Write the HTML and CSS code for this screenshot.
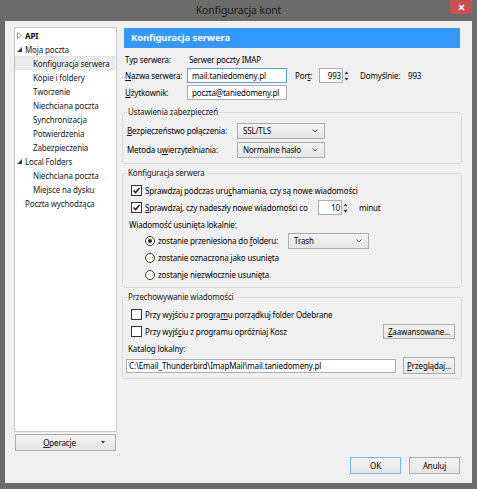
FILE: index.html
```html
<!DOCTYPE html>
<html lang="pl">
<head>
<meta charset="utf-8">
<title>Konfiguracja kont</title>
<link rel="stylesheet" href="styles.css">
</head>
<body>
<div class="window">
  <div class="titlebar">
    <span></span>
    <span class="title">Konfiguracja kont</span>
    <span class="close"><svg width="7" height="7" viewBox="0 0 7 7"><path d="M1 1L6 6M6 1L1 6" stroke="#fff" stroke-width="1.6"/></svg></span>
  </div>
  <div class="client">
    <div class="top">
      <div class="sidebar">
        <ul class="tree">
          <li class="row lvl0"><span class="tw"><svg width="5" height="7" viewBox="0 0 5 7"><path d="M0.5 0.5L4.5 3.5L0.5 6.5Z" fill="none" stroke="#8a8a8a" stroke-width="0.9"/></svg></span><b>API</b></li>
          <li class="row lvl0"><span class="tw"><svg width="5" height="5" viewBox="0 0 5 5"><path d="M5 0L5 5L0 5Z" fill="#404040"/></svg></span>Moja poczta</li>
          <li class="row lvl1 sel">Konfiguracja serwera</li>
          <li class="row lvl1">Kopie i foldery</li>
          <li class="row lvl1">Tworzenie</li>
          <li class="row lvl1">Niechciana poczta</li>
          <li class="row lvl1">Synchronizacja</li>
          <li class="row lvl1">Potwierdzenia</li>
          <li class="row lvl1">Zabezpieczenia</li>
          <li class="row lvl0"><span class="tw"><svg width="5" height="5" viewBox="0 0 5 5"><path d="M5 0L5 5L0 5Z" fill="#404040"/></svg></span>Local Folders</li>
          <li class="row lvl1">Niechciana poczta</li>
          <li class="row lvl1">Miejsce na dysku</li>
          <li class="row lvl0"><span class="tw"></span>Poczta wychodząca</li>
        </ul>
        <div class="btn ops"><span class="ops-label"><u>O</u>peracje</span><span class="ops-arrow"><svg width="4" height="3" viewBox="0 0 4 3"><path d="M0 0H4L2 2.5Z" fill="#333"/></svg></span></div>
      </div>
      <div class="main">
        <div class="header">Konfiguracja serwera</div>
        <div class="info">
          <div class="info-row">
            <span class="lbl">Typ serwera:</span>
            <span class="val">Serwer poczty IMAP</span>
          </div>
          <div class="info-row">
            <span class="lbl"><u>N</u>azwa serwera:</span>
            <span class="input focus w-server">mail.taniedomeny.pl</span>
            <span class="port-lbl">Por<u>t</u>:</span>
            <span class="spin"><span class="input num">993</span><span class="arrows"><svg width="7" height="14" viewBox="0 0 7 14"><path d="M1.5 5L3.5 2.5L5.5 5Z M1.5 9L3.5 11.5L5.5 9Z" fill="#333"/><path d="M0 7H7" stroke="#c9c9c9"/></svg></span></span>
            <span class="def">Domyślnie:</span>
            <span class="defv">993</span>
          </div>
          <div class="info-row">
            <span class="lbl"><u>U</u>żytkownik:</span>
            <span class="input w-server">poczta@taniedomeny.pl</span>
          </div>
        </div>

        <fieldset class="group g1">
          <legend>Ustawienia zabezpieczeń</legend>
          <div class="sec-grid">
            <span><u>B</u>ezpieczeństwo połączenia:</span>
            <span class="select w-sec"><span>SSL/TLS</span><svg class="chev" width="6" height="4" viewBox="0 0 6 4"><path d="M0.5 0.5L3 3L5.5 0.5" fill="none" stroke="#555" stroke-width="1"/></svg></span>
            <span>Metoda u<u>w</u>ierzytelniania:</span>
            <span class="select w-sec"><span>Normalne hasło</span><svg class="chev" width="6" height="4" viewBox="0 0 6 4"><path d="M0.5 0.5L3 3L5.5 0.5" fill="none" stroke="#555" stroke-width="1"/></svg></span>
          </div>
        </fieldset>

        <fieldset class="group g2">
          <legend>Konfiguracja serwera</legend>
          <div class="line chk-line">
            <span class="check on"><svg width="9" height="9" viewBox="0 0 9 9"><path d="M1.5 4.5L3.6 6.6L7.6 2" fill="none" stroke="#222" stroke-width="1.5"/></svg></span>
            <span>Sprawdzaj podczas uru<u>c</u>hamiania, czy są nowe wiadomości</span>
          </div>
          <div class="line chk-line">
            <span class="check on"><svg width="9" height="9" viewBox="0 0 9 9"><path d="M1.5 4.5L3.6 6.6L7.6 2" fill="none" stroke="#222" stroke-width="1.5"/></svg></span>
            <span class="chk2-text"><u>S</u>prawdzaj, czy nadeszły nowe wiadomości co</span>
            <span class="spin"><span class="input num">10</span><span class="arrows"><svg width="7" height="14" viewBox="0 0 7 14"><path d="M1.5 5L3.5 2.5L5.5 5Z M1.5 9L3.5 11.5L5.5 9Z" fill="#333"/><path d="M0 7H7" stroke="#c9c9c9"/></svg></span></span>
            <span class="minut">minut</span>
          </div>
          <div class="line del-line">Wiadomość usunięta lokalnie:</div>
          <div class="line radio-line">
            <span class="radio on"><span class="dot"></span></span>
            <span class="radio1-text">zostanie przeniesiona do <u>f</u>olderu:</span>
            <span class="select w-trash"><span>Trash</span><svg class="chev" width="6" height="4" viewBox="0 0 6 4"><path d="M0.5 0.5L3 3L5.5 0.5" fill="none" stroke="#555" stroke-width="1"/></svg></span>
          </div>
          <div class="line radio-line">
            <span class="radio"></span>
            <span>zostanie oznaczona jako usunięta</span>
          </div>
          <div class="line radio-line">
            <span class="radio"></span>
            <span>zostanje niezwłocznie usunięta</span>
          </div>
        </fieldset>

        <fieldset class="group g3">
          <legend>Przechowywanie wiadomości</legend>
          <div class="line chk-line">
            <span class="check"></span>
            <span>Przy wyjściu z progra<u>m</u>u porządkuj folder Odebrane</span>
          </div>
          <div class="line chk-line">
            <span class="check"></span>
            <span>Przy wyjś<u>c</u>iu z programu opróżniaj Kosz</span>
            <span class="btn adv"><u>Z</u>aawansowane...</span>
          </div>
          <div class="line kat-line">Katalog lokalny:</div>
          <div class="line path-line">
            <span class="input path">C:\Email_Thunderbird\ImapMail\mail.taniedomeny.pl</span>
            <span class="btn browse"><u>P</u>rzeglądaj...</span>
          </div>
        </fieldset>
      </div>
    </div>
    <div class="footer">
      <span class="btn dlg default">OK</span>
      <span class="btn dlg">Anuluj</span>
    </div>
  </div>
</div>
</body>
</html>
```
FILE: styles.css
```css
* { box-sizing: border-box; margin: 0; padding: 0; }
html, body { width: 477px; height: 489px; overflow: hidden; }
body {
  font-family: "Noto Sans", "Open Sans", sans-serif;
  font-size: 8px;
  letter-spacing: -0.15px;
  color: #000;
  background: #6b6b6b;
}
u { text-decoration: underline; text-underline-offset: 1px; }

.window {
  width: 477px;
  height: 489px;
  display: flex;
  flex-direction: column;
  background: #6b6b6b;
}

/* title bar */
.titlebar {
  height: 21px;
  display: grid;
  grid-template-columns: 1fr auto 1fr;
  align-items: start;
}
.title {
  font-size: 10.5px;
  letter-spacing: -0.1px;
  line-height: 20px;
  color: #1c1c1c;
}
.close {
  justify-self: end;
  margin-right: 5px;
  width: 22px;
  height: 14px;
  background: #c75050;
  display: flex;
  align-items: center;
  justify-content: center;
}

/* client */
.client {
  flex: 1;
  margin: 0 5px 6px;
  background: #f0f0f0;
  padding: 6px 10px 9px 9px;
  display: flex;
  flex-direction: column;
  gap: 6px;
  min-height: 0;
}
.top {
  flex: 1;
  display: flex;
  gap: 5px;
  min-height: 0;
}

/* sidebar */
.sidebar {
  width: 103px;
  display: flex;
  flex-direction: column;
  gap: 2px;
}
.tree {
  flex: 1;
  background: #fff;
  border: 1px solid #c9c9c9;
  list-style: none;
  padding-top: 0;
}
.row {
  height: 14px;
  display: flex;
  align-items: center;
  white-space: nowrap;
  color: #1a1a1a;
}
.row b { font-weight: 700; color: #000; }
.lvl0 { padding-left: 2px; }
.lvl1 { padding-left: 18px; }
.tw {
  width: 8px;
  display: flex;
  align-items: center;
}
.sel {
  margin-right: 1px;
  background: #ececec;
  border: 1px solid #e4e4e4;
  padding-left: 17px;
}

.btn {
  display: flex;
  align-items: center;
  justify-content: center;
  border: 1px solid #acacac;
  background: linear-gradient(#f2f2f2, #e6e6e6);
  color: #000;
  white-space: nowrap;
}
.ops {
  height: 17px;
  margin: 0 1px;
}
.ops-label { flex: 1; text-align: center; padding-left: 2px; }
.ops-arrow { width: 14px; display: flex; align-items: center; }

/* main */
.main {
  width: 340px;
  display: flex;
  flex-direction: column;
}
.header {
  margin: 1px 2px 0;
  height: 20px;
  background: #3399ff;
  color: #fff;
  font-weight: 700;
  font-size: 9.5px;
  letter-spacing: -0.1px;
  line-height: 20px;
  padding-left: 7px;
}
.info {
  margin-top: 4px;
  padding-left: 3px;
  display: flex;
  flex-direction: column;
}
.info-row {
  height: 17px;
  display: flex;
  align-items: center;
  white-space: nowrap;
}
.info-row:first-child { height: 15px; }
.lbl { width: 62px; }
.val { padding-left: 2px; }

.input {
  display: flex;
  align-items: center;
  height: 15px;
  background: #fff;
  border: 1px solid #abadb3;
  padding-left: 4px;
  white-space: nowrap;
  overflow: hidden;
}
.input.focus { border-color: #569de5; }
.w-server { width: 100px; }
.port-lbl { margin-left: 8px; width: 24px; }
.spin { display: flex; align-items: center; }
.num {
  width: 24px;
  justify-content: flex-end;
  padding: 0 1px 0 0;
}
.arrows {
  width: 7px;
  height: 15px;
  display: flex;
  align-items: center;
}
.def { margin-left: 10px; width: 48px; }

/* groups */
.group {
  border: 1px solid #dcdcdc;
  border-radius: 3px;
  padding: 3px 6px 4px 4px;
  margin-top: 3px;
}
.g1 { margin-top: 5px; }
legend {
  padding: 0 1px;
  line-height: 12px;
  color: #1a1a1a;
}
.sec-grid {
  display: grid;
  grid-template-columns: 110px auto;
  grid-auto-rows: 19px;
  align-items: center;
  justify-content: start;
}
.select {
  display: flex;
  align-items: center;
  justify-content: space-between;
  height: 16px;
  border: 1px solid #acacac;
  background: linear-gradient(#f2f2f2, #e6e6e6);
  padding: 0 6px 0 5px;
  white-space: nowrap;
}
.w-sec { width: 88px; }
.w-trash { width: 81px; margin-left: 10px; }

.line {
  height: 17px;
  display: flex;
  align-items: center;
  white-space: nowrap;
}
.chk-line { padding-left: 4px; }
.check {
  width: 11px;
  height: 11px;
  border: 1px solid #333;
  background: #fff;
  margin-right: 3px;
  display: flex;
  align-items: center;
  justify-content: center;
  flex: none;
}
.chk2-text { width: 173px; }
.minut { margin-left: 10px; }
.del-line { padding-left: 2px; height: 16px; }
.radio-line { padding-left: 18px; }
.radio {
  width: 10px;
  height: 10px;
  border: 1px solid #333;
  border-radius: 50%;
  background: #fff;
  margin-right: 3px;
  display: flex;
  align-items: center;
  justify-content: center;
  flex: none;
}
.dot { width: 4px; height: 4px; border-radius: 50%; background: #222; }
.radio1-text { width: 120px; }

.adv {
  margin-left: auto;
  width: 72px;
  height: 15px;
}
.kat-line { padding-left: 1px; height: 17px; }
.path-line { margin-left: -1px; }
.path { width: 270px; height: 14px; padding-left: 2px; }
.browse {
  margin-left: auto;
  width: 52px;
  height: 17px;
}

/* footer */
.footer {
  display: flex;
  justify-content: flex-end;
  gap: 8px;
  margin-right: 2px;
}
.dlg { width: 51px; height: 17px; }
.dlg.default { border-color: #7eb4ea; }
```
